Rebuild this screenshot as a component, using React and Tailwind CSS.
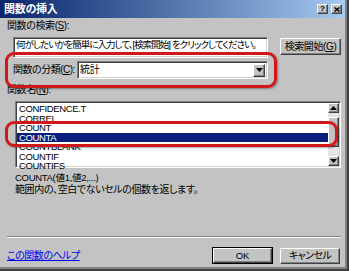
const sunken =
  'border border-t-[#808080] border-l-[#808080] border-b-white border-r-white shadow-[inset_1px_1px_0_#404040,inset_-1px_-1px_0_#d4d0c8]'
const raised =
  'border border-t-white border-l-white border-b-[#404040] border-r-[#404040] shadow-[inset_-1px_-1px_0_#808080] bg-[#c3c3c3]'

function Arrow({ down }) {
  return (
    <svg width="7" height="4" viewBox="0 0 7 4">
      <path d={down ? 'M0 0h7L3.5 4z' : 'M0 4h7L3.5 0z'} fill="#000" />
    </svg>
  )
}

function Btn({ children, def, className = '' }) {
  const inner = (
    <div className={`${raised} w-full h-full flex items-center justify-center`}>{children}</div>
  )
  return def ? (
    <div className={`border border-black ${className}`}>{inner}</div>
  ) : (
    <div className={className}>{inner}</div>
  )
}

const items = ['CONFIDENCE.T', 'CORREL', 'COUNT', 'COUNTA', 'COUNTBLANK', 'COUNTIF', 'COUNTIFS']

export default function App() {
  return (
    <div className="relative w-[349px] h-[271px] overflow-hidden bg-[#c3c3c3] border-r-[2px] border-b-[2px] border-r-[#404040] border-b-[#404040] shadow-[inset_-2px_-2px_0_#808080] font-['Liberation_Sans','Noto_Sans_CJK_JP',sans-serif] [font-feature-settings:'palt'] text-[10px] leading-none text-black">
      {/* title bar */}
      <div className="h-[18px] mr-[2px] flex items-center justify-between pl-[4px] pr-[3px] bg-linear-to-r from-[#0a246a] to-[#a6caf0]">
        <span className="text-white font-bold text-[11px] tracking-[-0.3px]">関数の挿入</span>
        <div className="flex gap-[3px]">
          <div className={`${raised} w-[11px] h-[10px] flex items-center justify-center text-[8px] font-bold`}>?</div>
          <div className={`${raised} w-[11px] h-[10px] flex items-center justify-center`}>
            <svg width="6" height="5" viewBox="0 0 6 5">
              <path d="M0.5 0.5l5 4M5.5 0.5l-5 4" stroke="#000" strokeWidth="1.4" />
            </svg>
          </div>
        </div>
      </div>

      <div className="pl-[7px] pr-[6px]">
        <div className="mt-[2px] h-[12px] flex items-center tracking-[-0.4px]">
          関数の検索(<span className="underline">S</span>):
        </div>

        <div className="mt-[5px] flex items-start">
          <div className={`${sunken} ml-[6px] w-[255px] h-[21px] bg-white pl-[2px] pt-[2px] text-[9.5px] tracking-[-0.95px] whitespace-nowrap overflow-hidden`}>
            何がしたいかを簡単に入力して、[検索開始] をクリックしてください。
          </div>
          <Btn className="ml-[12px] mt-[1px] w-[61px] h-[17px]">
            <span className="tracking-[-0.4px]">
              検索開始(<span className="underline">G</span>)
            </span>
          </Btn>
        </div>

        <div className="mt-[3px] flex items-center">
          <div className="ml-[6px] w-[64px] tracking-[-0.5px] whitespace-nowrap">
            関数の分類(<span className="underline">C</span>):
          </div>
          <div className={`${sunken} w-[191px] h-[18px] bg-white flex items-center justify-between pl-[2px] pr-[2px]`}>
            <span className="tracking-[-0.3px]">統計</span>
            <div className={`${raised} w-[12px] h-[13px] flex items-center justify-center`}>
              <Arrow down />
            </div>
          </div>
        </div>

        <div className="mt-[5px] h-[12px] flex items-center tracking-[-0.4px]">
          関数名(<span className="underline">N</span>):
        </div>

        <div className={`${sunken} mt-[5px] ml-[8px] w-[326px] h-[67px] bg-white flex p-[1px]`}>
          <div className="flex-1 pt-[1px]">
            {items.map((it) => (
              <div
                key={it}
                className={`h-[9.5px] flex items-center pl-[2px] text-[9.5px] tracking-[-0.35px] ${
                  it === 'COUNTA' ? 'bg-[#0a1f7d] text-white' : ''
                }`}
              >
                {it}
              </div>
            ))}
          </div>
          <div className="w-[11px] flex flex-col bg-[#e4e4e4]">
            <div className={`${raised} h-[10px] flex items-center justify-center`}>
              <Arrow />
            </div>
            <div className="flex-1 flex flex-col pt-[4px]">
              <div className={`${raised} h-[30px]`} />
            </div>
            <div className={`${raised} h-[10px] flex items-center justify-center`}>
              <Arrow down />
            </div>
          </div>
        </div>

        <div className="mt-[4px] ml-[8px] h-[12px] flex items-center text-[9.5px] tracking-[-0.3px]">
          COUNTA(値1,値2,...)
        </div>
        <div className="ml-[8px] h-[12px] flex items-center tracking-[-0.4px]">
          範囲内の、空白でないセルの個数を返します。
        </div>

        <div className="mt-[40px] w-[334px] border-t border-t-[#808080] border-b border-b-white" />

        <div className="mt-[9px] flex items-center">
          <span className="text-[#0000ee] underline tracking-[-0.5px] mt-[1px]">この関数のヘルプ</span>
          <Btn def className="ml-auto w-[61px] h-[17px]">
            <span className="text-[9.5px]">OK</span>
          </Btn>
          <Btn className="ml-[7px] mr-[1px] w-[60px] h-[16px]">
            <span className="tracking-[-0.6px]">キャンセル</span>
          </Btn>
        </div>
      </div>

      {/* annotation highlights */}
      <div className="absolute left-[5px] top-[52px] w-[272px] h-[36px] border-[3px] border-[#d01818] rounded-[9px] shadow-[1px_1px_2px_rgba(0,0,0,0.35)]" />
      <div className="absolute left-[5px] top-[121px] w-[333px] h-[26px] border-[3px] border-[#d01818] rounded-[9px] shadow-[1px_1px_2px_rgba(0,0,0,0.35)]" />
    </div>
  )
}
